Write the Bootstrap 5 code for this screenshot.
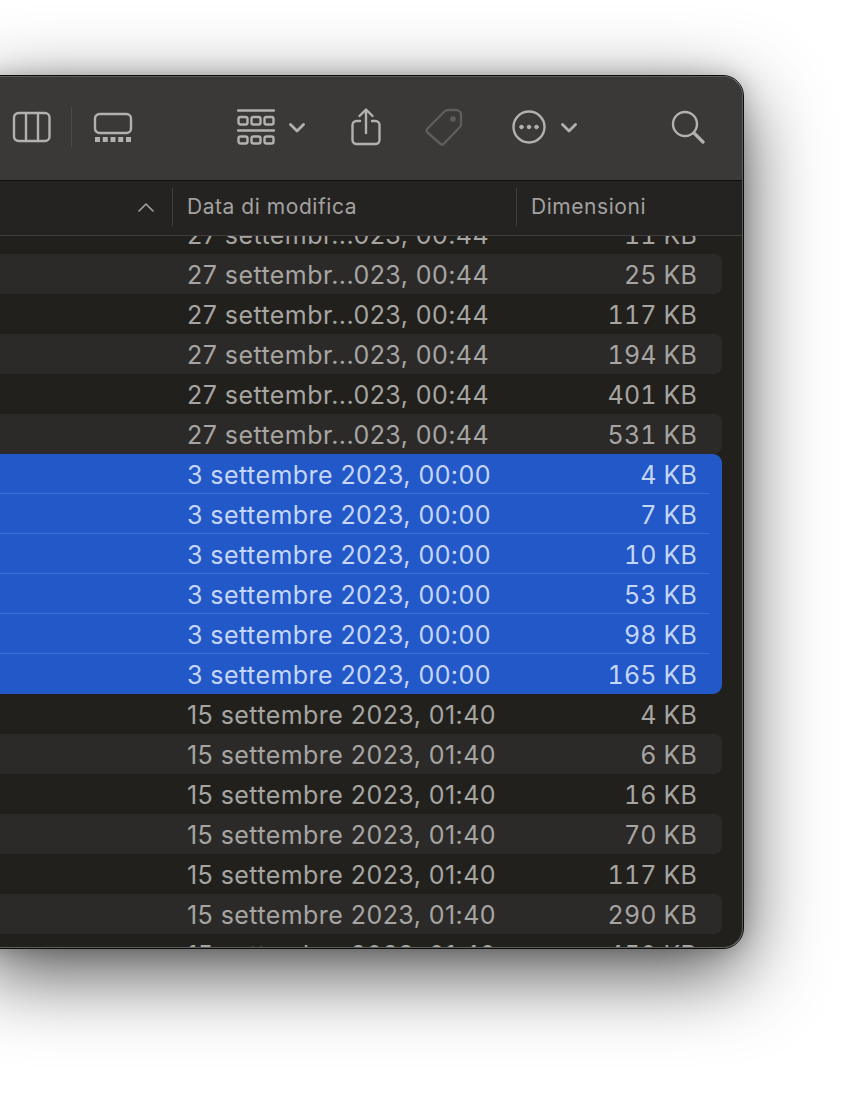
<!DOCTYPE html>
<html lang="it">
<head>
<meta charset="utf-8">
<title>Finder</title>
<link href="https://cdn.jsdelivr.net/npm/bootstrap@5.3.0/dist/css/bootstrap.min.css" rel="stylesheet">
<style>
html,body{height:100%;margin:0;background:#fff;overflow:hidden}
.stage{padding-top:76px;height:1096px;overflow:hidden}
.win{width:763px;height:872px;margin-left:-20px;border-radius:20px;overflow:hidden;background:#21201d;border:1px solid #5e5d5b;outline:1px solid #0c0c0b;box-shadow:0 24px 80px rgba(0,0,0,.7),0 0 22px rgba(0,0,0,.22);font-family:Inter,"Liberation Sans",sans-serif;color:#a6a5a2}
.tbar{height:104px;padding-bottom:3px;background:#3a3938;border-bottom:1px solid #0e0e0d;flex:none}
.tbar svg{display:block;flex:none;fill:none;stroke:#b2b1af;stroke-width:2.4;stroke-linecap:round;stroke-linejoin:round}
.vsep{width:1px;height:40px;background:#4b4a49;flex:none}
.thead{height:55px;padding-bottom:2px;background:#242321;border-bottom:1px solid #3f3e3c;flex:none;font-size:21px;letter-spacing:.55px;color:#a3a2a0}
.hcaret{width:172px;display:flex;justify-content:flex-end}
.hdate{width:344px;border-left:1px solid #3f3e3c;height:38px;padding-left:14px;line-height:38px}
.hsize{border-left:1px solid #3f3e3c;height:38px;padding-left:14px;line-height:38px}
.rows{flex:1;overflow:hidden;padding:0 20px 0 0}
.rowlist{margin-top:-22px}
.frow{height:40px;padding-top:2px;display:flex;align-items:center;font-size:25px;line-height:38px;white-space:nowrap}
.band{background:#2b2a28;border-radius:0 8px 8px 0}
.fdate{margin-left:206px;flex:1;letter-spacing:.44px}
.fsize{width:200px;text-align:right;padding-right:25px;letter-spacing:.15px;font-variant-numeric:tabular-nums}
.selblock{background:#2358c9;border-radius:0 9px 9px 0;color:#c6d6f6}
.selblock .frow{margin-right:12px}
.selblock .fsize{padding-right:13px}
.selblock .frow+.frow{box-shadow:0 -1px 0 #3e6ed4}
</style>
</head>
<body>
<div class="stage">
<div class="win d-flex flex-column">
  <div class="tbar d-flex align-items-center">
    <svg width="40" height="32" viewBox="0 0 40 32" style="margin-left:31px"><rect x="2" y="2" width="35.500" height="28" rx="4.5"/><path d="M14 2v28M26 2v28"/></svg>
    <div class="vsep" style="margin-left:19px"></div>
    <svg width="40" height="31" viewBox="0 0 40 31" style="margin-left:21px"><rect x="2" y="2" width="36" height="19" rx="4.5"/><path d="M2 27.500h36" stroke-width="5" stroke-linecap="butt" stroke-dasharray="5 2.750"/></svg>
    <svg width="38" height="36" viewBox="0 0 38 36" style="margin-left:104px"><path d="M1 1.500h36M1 21.500h36"/><rect x="1.500" y="8" width="9" height="7.500" rx="2"/><rect x="14.500" y="8" width="9" height="7.500" rx="2"/><rect x="27.500" y="8" width="9" height="7.500" rx="2"/><rect x="1.500" y="27.500" width="9" height="7" rx="2"/><rect x="14.500" y="27.500" width="9" height="7" rx="2"/><rect x="27.500" y="27.500" width="9" height="7" rx="2"/></svg>
    <svg width="16" height="10" viewBox="0 0 16 10" style="margin-left:14px;stroke-width:2.800;transform:translateY(1px)"><path d="M1.500 1.500 8 8l6.500-6.500"/></svg>
    <svg width="30" height="38" viewBox="0 0 30 38" style="margin-left:46px"><path d="M9 13H5.500A4 4 0 0 0 1.500 17v15a4 4 0 0 0 4 4h19a4 4 0 0 0 4-4V17a4 4 0 0 0-4-4H21M15 25V2M8.500 8 15 1.500 21.500 8"/></svg>
    <svg width="38" height="38" viewBox="0 0 38 38" style="margin-left:44px;stroke:#5e5d5c"><path d="M2.500 20.500 19.500 3.500A5 5 0 0 1 23 2h8a5 5 0 0 1 5 5v9a5 5 0 0 1-1.500 3.500L19 35.500a3 3 0 0 1-4 0L2.500 24.500a3 3 0 0 1 0-4Z"/><circle cx="28" cy="11" r="1.600" fill="#5e5d5c"/></svg>
    <svg width="34" height="34" viewBox="0 0 34 34" style="margin-left:49px"><circle cx="17" cy="17" r="15.500"/><circle cx="9.500" cy="17" r="1.800" fill="#b2b1af" stroke-width="1"/><circle cx="17" cy="17" r="1.800" fill="#b2b1af" stroke-width="1"/><circle cx="24.500" cy="17" r="1.800" fill="#b2b1af" stroke-width="1"/></svg>
    <svg width="16" height="10" viewBox="0 0 16 10" style="margin-left:15px;stroke-width:2.800;transform:translateY(1px)"><path d="M1.500 1.500 8 8l6.500-6.500"/></svg>
    <svg width="34" height="34" viewBox="0 0 34 34" style="margin-left:94px"><circle cx="14" cy="14" r="12"/><path d="m23 23 9 9" stroke-width="3.200"/></svg>
  </div>
  <div class="thead d-flex align-items-center">
    <div class="hcaret"><svg width="16" height="10" viewBox="0 0 16 10" fill="none" stroke="#a3a2a0" stroke-width="1.600" stroke-linecap="round" stroke-linejoin="round" style="margin-right:-1px"><path d="M1 9 8 2l7 7"/></svg></div>
    <div style="width:19px"></div>
    <div class="hdate">Data di modifica</div>
    <div class="hsize flex-grow-1">Dimensioni</div>
  </div>
  <div class="rows">
    <div class="rowlist" id="rowlist"></div>
  </div>
</div>
</div>
<script>
const mk=(d,s,b)=>`<div class="frow${b?' band':''}"><span class="fdate">${d}</span><span class="fsize">${s}</span></div>`;
const a="27 settembr...023, 00:44",b="3 settembre 2023, 00:00",c="15 settembre 2023, 01:40";
let h="";
["11 KB","25 KB","117 KB","194 KB","401 KB","531 KB"].forEach((s,i)=>h+=mk(a,s,i%2));
h+='<div class="selblock">';
["4 KB","7 KB","10 KB","53 KB","98 KB","165 KB"].forEach(s=>h+=mk(b,s,false));
h+='</div>';
["4 KB","6 KB","16 KB","70 KB","117 KB","290 KB","450 KB"].forEach((s,i)=>h+=mk(c,s,i%2));
document.getElementById("rowlist").innerHTML=h;
</script>
<script src="https://cdn.jsdelivr.net/npm/bootstrap@5.3.0/dist/js/bootstrap.bundle.min.js"></script>
</body>
</html>
